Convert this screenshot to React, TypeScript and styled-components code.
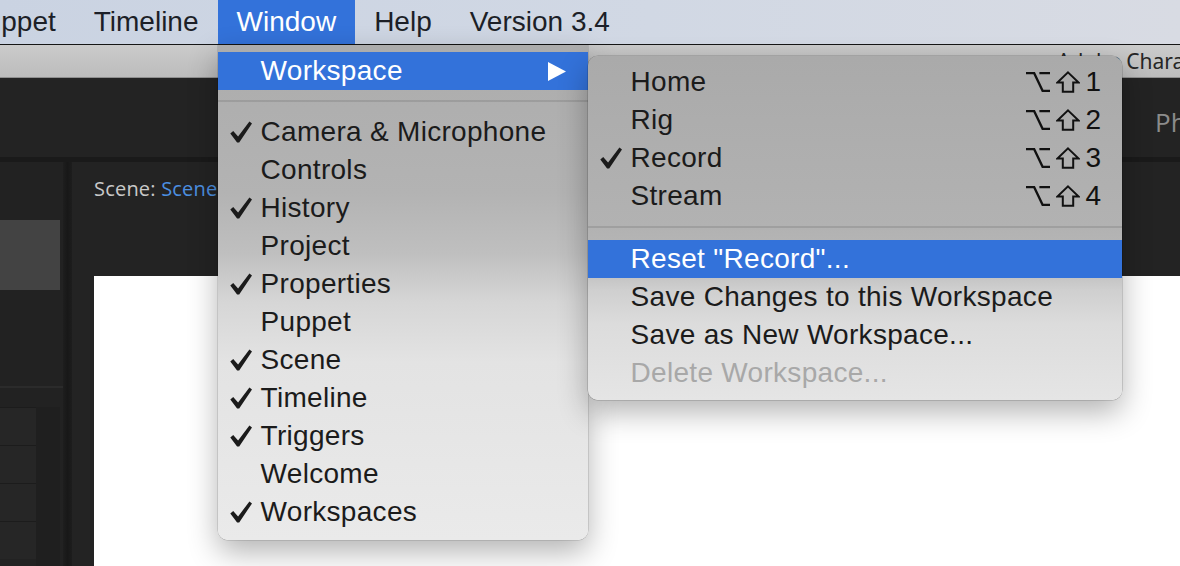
import styled, { createGlobalStyle } from "styled-components";

const GlobalStyle = createGlobalStyle`
  html, body {
    margin: 0;
    padding: 0;
    background: #222;
  }
  body {
    overflow: hidden;
    font-family: "Liberation Sans", Arial, sans-serif;
  }
`;

const BLUE = "#3372da";

const Screen = styled.div`
  position: relative;
  width: 1180px;
  height: 566px;
  overflow: hidden;
  background: #232323;
  display: flex;
  flex-direction: column;
`;

const MenuBar = styled.div`
  position: relative;
  z-index: 5;
  display: flex;
  flex: none;
  height: 44px;
  background: linear-gradient(90deg, #cad3e2 0%, #d1d8e4 55%, #d8dbe3 100%);
  border-bottom: 1px solid #161616;
`;

const MenuTitle = styled.div<{ $active?: boolean; $lead?: boolean }>`
  position: relative;
  padding: 0 19px;
  margin-left: ${({ $lead }) => ($lead ? "-52px" : "0")};
  line-height: 44px;
  font-size: 28px;
  white-space: nowrap;
  color: ${({ $active }) => ($active ? "#fff" : "#1c1f27")};
  background: ${({ $active }) => ($active ? BLUE : "transparent")};
`;

const Dropdown = styled.div`
  position: absolute;
  top: calc(100% + 1px);
  left: 0;
  width: 370px;
  padding: 7px 0 9px;
  border-radius: 0 0 10px 10px;
  background: linear-gradient(
    180deg,
    #acacac 0%,
    #b3b3b3 30%,
    #bfbfbf 42%,
    #d6d6d6 52%,
    #e3e3e3 64%,
    #eaeaea 100%
  );
  box-shadow: 0 12px 30px rgba(0, 0, 0, 0.3), 0 0 0 0.5px rgba(0, 0, 0, 0.2);
`;

const Submenu = styled.div`
  position: absolute;
  top: 4px;
  left: 100%;
  width: 534px;
  padding: 7px 0 8px;
  border-radius: 10px;
  background: linear-gradient(
    180deg,
    #aaaaaa 0%,
    #b2b2b2 50%,
    #b8b8b8 60%,
    #cfcfcf 68%,
    #dcdcdc 78%,
    #e5e5e5 100%
  );
  box-shadow: 0 12px 30px rgba(0, 0, 0, 0.3), 0 0 0 0.5px rgba(0, 0, 0, 0.25);
`;

const MenuItem = styled.div<{ $active?: boolean; $disabled?: boolean }>`
  position: relative;
  display: flex;
  align-items: center;
  height: 38px;
  padding: 0 22px 0 12px;
  font-size: 28px;
  letter-spacing: 0.3px;
  white-space: nowrap;
  color: ${({ $active, $disabled }) =>
    $active ? "#fff" : $disabled ? "#a8a8a8" : "#1b1b1b"};
  background: ${({ $active }) => ($active ? BLUE : "transparent")};
`;

const CheckSlot = styled.span`
  flex: none;
  width: 31px;
  height: 22px;
  display: flex;
  align-items: center;
`;

const Label = styled.span`
  flex: 1;
`;

const Separator = styled.div<{ $space: number }>`
  height: 2px;
  margin: ${({ $space }) => `${$space}px 0 ${$space + 1}px`};
  background: rgba(0, 0, 0, 0.1);
`;

const Shortcut = styled.span`
  display: flex;
  align-items: center;
  gap: 6px;
  color: #111;
  letter-spacing: 0;
`;

const Digit = styled.span`
  width: 14px;
  text-align: right;
  font-size: 28px;
`;

const TitleBar = styled.div`
  flex: none;
  height: 32px;
  display: flex;
  justify-content: flex-end;
  align-items: center;
  background: linear-gradient(180deg, #cbcbcb 0%, #bcbcbc 100%);
  border-bottom: 1px solid #8f8f8f;
`;

const WindowTitle = styled.span`
  width: 123px;
  white-space: nowrap;
  font-family: "Noto Sans", "Liberation Sans", sans-serif;
  font-size: 21px;
  color: #262626;
`;

const Toolbar = styled.div`
  flex: none;
  height: 79px;
  display: flex;
  justify-content: flex-end;
  align-items: center;
  background: #232323;
  border-bottom: 5px solid #1a1a1a;
`;

const ToolTab = styled.span`
  width: 25px;
  margin-top: 8px;
  white-space: nowrap;
  font-family: "Open Sans", sans-serif;
  font-size: 26px;
  color: #8b8b8b;
`;

const Workarea = styled.div`
  flex: 1;
  display: flex;
  min-height: 0;
`;

const LeftPanel = styled.div`
  flex: none;
  width: 63px;
  display: flex;
  flex-direction: column;
  padding-top: 58px;
  background: #222;
`;

const Thumb = styled.div`
  width: 60px;
  height: 70px;
  background: #434343;
`;

const LayerList = styled.div`
  margin-top: 96px;
  flex: 1;
  display: flex;
  border-top: 2px solid #2b2b2b;
  padding-top: 19px;
`;

const LayerRows = styled.div`
  width: 36px;
  display: flex;
  flex-direction: column;
`;

const LayerRow = styled.div`
  height: 37px;
  background: #262626;
  border-top: 1px solid #1c1c1c;
`;

const LayerGutter = styled.div`
  width: 24px;
  background: #1f1f1f;
`;

const PanelDivider = styled.div`
  flex: none;
  width: 9px;
  background: linear-gradient(90deg, #1e1e1e, #181818 50%, #1d1d1d);
`;

const ScenePanel = styled.div`
  flex: 1;
  display: flex;
  flex-direction: column;
  padding-left: 22px;
  background: #232323;
`;

const SceneLabel = styled.div`
  margin-top: 15px;
  height: 24px;
  line-height: 24px;
  font-family: "Open Sans", sans-serif;
  font-size: 20px;
  letter-spacing: 0.2px;
  color: #c9c9c9;
`;

const SceneName = styled.span`
  color: #4c8fe0;
`;

const Canvas = styled.div`
  flex: 1;
  margin-top: 75px;
  background: #fff;
`;

const Check = () => (
  <svg width="22" height="22" viewBox="0 0 22 22">
    <path d="M0.3 12.6 L3.2 10 L8.1 15.6 L19.4 0.4 L22 2.4 L9.2 21.6 L7.1 21.6 Z" fill="currentColor" />
  </svg>
);

const Arrow = () => (
  <svg width="18" height="19" viewBox="0 0 18 19">
    <path d="M0 0 L18 9.5 L0 19 Z" fill="#fff" />
  </svg>
);

const OptionKey = () => (
  <svg width="24" height="20" viewBox="0 0 24 20">
    <path d="M0 1.2 H8.2 L16.6 18.8 H24 M13.4 1.2 H24" fill="none" stroke="currentColor" strokeWidth="2.3" />
  </svg>
);

const ShiftKey = () => (
  <svg width="24" height="22" viewBox="0 0 24 22">
    <path
      d="M12 1.4 L22.6 11.6 H17.2 V20.8 H6.8 V11.6 H1.4 Z"
      fill="none"
      stroke="currentColor"
      strokeWidth="2"
      strokeLinejoin="miter"
    />
  </svg>
);

const windowItems: [string, boolean][] = [
  ["Camera & Microphone", true],
  ["Controls", false],
  ["History", true],
  ["Project", false],
  ["Properties", true],
  ["Puppet", false],
  ["Scene", true],
  ["Timeline", true],
  ["Triggers", true],
  ["Welcome", false],
  ["Workspaces", true],
];

const workspaces: [string, boolean, string][] = [
  ["Home", false, "1"],
  ["Rig", false, "2"],
  ["Record", true, "3"],
  ["Stream", false, "4"],
];

export default function App() {
  return (
    <Screen>
      <GlobalStyle />
      <MenuBar>
        <MenuTitle $lead>Puppet</MenuTitle>
        <MenuTitle>Timeline</MenuTitle>
        <MenuTitle $active>
          Window
          <Dropdown>
            <MenuItem $active>
              <CheckSlot />
              <Label>Workspace</Label>
              <Arrow />
              <Submenu>
                {workspaces.map(([name, checked, key]) => (
                  <MenuItem key={name}>
                    <CheckSlot>{checked && <Check />}</CheckSlot>
                    <Label>{name}</Label>
                    <Shortcut>
                      <OptionKey />
                      <ShiftKey />
                      <Digit>{key}</Digit>
                    </Shortcut>
                  </MenuItem>
                ))}
                <Separator $space={11} />
                <MenuItem $active>
                  <CheckSlot />
                  <Label>Reset "Record"...</Label>
                </MenuItem>
                <MenuItem>
                  <CheckSlot />
                  <Label>Save Changes to this Workspace</Label>
                </MenuItem>
                <MenuItem>
                  <CheckSlot />
                  <Label>Save as New Workspace...</Label>
                </MenuItem>
                <MenuItem $disabled>
                  <CheckSlot />
                  <Label>Delete Workspace...</Label>
                </MenuItem>
              </Submenu>
            </MenuItem>
            <Separator $space={10} />
            {windowItems.map(([name, checked]) => (
              <MenuItem key={name}>
                <CheckSlot>{checked && <Check />}</CheckSlot>
                <Label>{name}</Label>
              </MenuItem>
            ))}
          </Dropdown>
        </MenuTitle>
        <MenuTitle>Help</MenuTitle>
        <MenuTitle>Version 3.4</MenuTitle>
      </MenuBar>
      <TitleBar>
        <WindowTitle>Adobe Character Animator</WindowTitle>
      </TitleBar>
      <Toolbar>
        <ToolTab>Physics</ToolTab>
      </Toolbar>
      <Workarea>
        <LeftPanel>
          <Thumb />
          <LayerList>
            <LayerRows>
              <LayerRow />
              <LayerRow />
              <LayerRow />
              <LayerRow />
            </LayerRows>
            <LayerGutter />
          </LayerList>
        </LeftPanel>
        <PanelDivider />
        <ScenePanel>
          <SceneLabel>
            Scene: <SceneName>Scene</SceneName>
          </SceneLabel>
          <Canvas />
        </ScenePanel>
      </Workarea>
    </Screen>
  );
}
